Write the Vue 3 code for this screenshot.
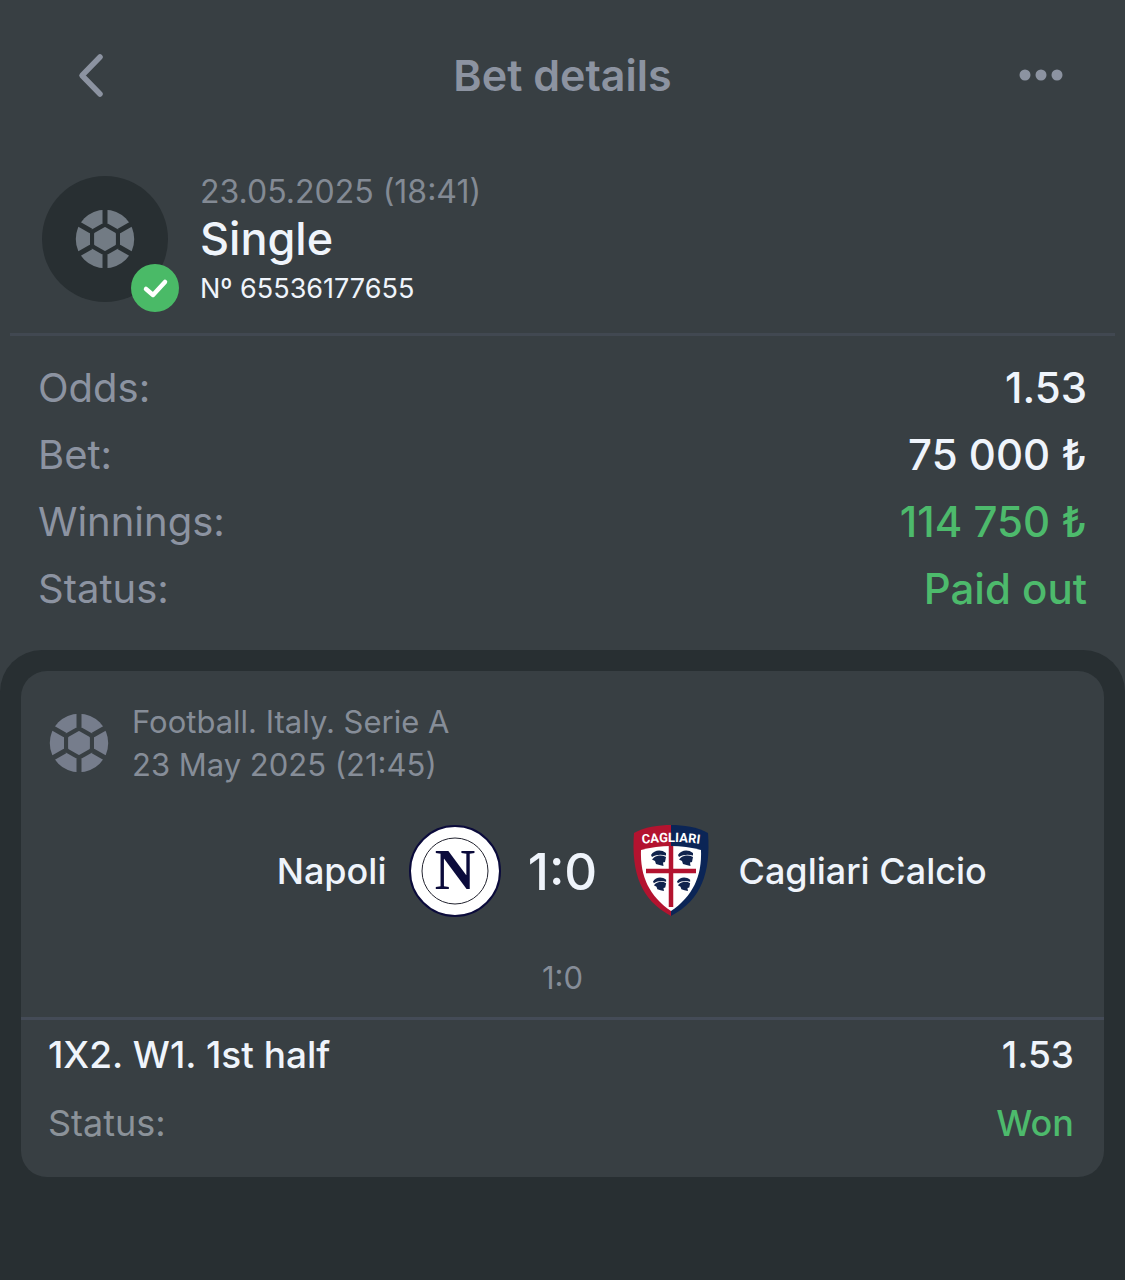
<script setup>
import { ref } from "vue"

const summary = ref([
    { id: 1, label: "Odds:", value: "1.53", win: false },
    { id: 2, label: "Bet:", value: "75 000 ₺", win: false },
    { id: 3, label: "Winnings:", value: "114 750 ₺", win: true },
    { id: 4, label: "Status:", value: "Paid out", win: true }
])

// the six outer panels are cut from the ring by these seams
const seams = [
    "M30 -2V14", "M30 46V62",
    "M16 22L2 14", "M44 22L58 14",
    "M16 38L2 46", "M44 38L58 46"
]
</script>

<template>
    <svg class="defs" aria-hidden="true">
        <defs>
            <mask id="ball-mask">
                <circle cx="30" cy="30" r="29.200" fill="#fff" />
                <path d="M30 13L45 21.600V38.400L30 47L15 38.400V21.600Z" fill="#000" />
                <path v-for="seam in seams" :key="seam" :d="seam" stroke="#000" stroke-width="5" />
                <path d="M30 19.200L39.700 24.700V35.300L30 40.800L20.300 35.300V24.700Z" fill="#fff" stroke="#fff" stroke-width="2.400" stroke-linejoin="round" />
            </mask>
            <symbol id="ball" viewBox="0 0 60 60">
                <rect width="60" height="60" fill="currentColor" mask="url(#ball-mask)" />
            </symbol>
            <symbol id="moor" viewBox="0 0 16 16">
                <path d="M0 5C3 0 10 -1 15 3L15 5.500C10 4 5 4.500 1 7Z" fill="#10234d" />
                <path d="M3 7.500C7 5 11 5 15 7L14 12L12 12.500L12.500 16L8.500 15L5 14L4 11L1 9.500Z" fill="#10234d" />
            </symbol>
        </defs>
    </svg>

    <main class="page">
        <header class="topbar">
            <button class="icon-btn" aria-label="Back">
                <svg width="30" height="48" viewBox="0 0 30 48">
                    <path d="M23 6L5 24.500L23 43" fill="none" stroke="currentColor" stroke-width="5.500" stroke-linecap="round" stroke-linejoin="round" />
                </svg>
            </button>
            <h1>Bet details</h1>
            <button class="icon-btn more" aria-label="More">
                <svg width="44" height="12" viewBox="0 0 44 12">
                    <circle cx="6" cy="6" r="5.500" fill="currentColor" />
                    <circle cx="22" cy="6" r="5.500" fill="currentColor" />
                    <circle cx="38" cy="6" r="5.500" fill="currentColor" />
                </svg>
            </button>
        </header>

        <section class="bet">
            <div class="avatar">
                <svg class="ball" width="60" height="60"><use href="#ball" /></svg>
                <span class="badge">
                    <svg width="48" height="48" viewBox="0 0 48 48">
                        <path d="M15 25L22 31L34 18" fill="none" stroke="#fff" stroke-width="4.500" stroke-linecap="round" stroke-linejoin="round" />
                    </svg>
                </span>
            </div>
            <div class="bet-info">
                <div class="bet-date">23.05.2025 (18:41)</div>
                <h2>Single</h2>
                <div class="bet-number">Nº 65536177655</div>
            </div>
        </section>

        <dl class="summary">
            <div v-for="row in summary" :key="row.id" class="row">
                <dt>{{ row.label }}</dt>
                <dd :class="{ win: row.win }">{{ row.value }}</dd>
            </div>
        </dl>

        <section class="events">
            <article class="card">
                <div class="league">
                    <svg class="ball" width="60" height="60"><use href="#ball" /></svg>
                    <div>
                        <div>Football. Italy. Serie A</div>
                        <div>23 May 2025 (21:45)</div>
                    </div>
                </div>

                <div class="match">
                    <div class="team home">
                        <span>Napoli</span>
                        <svg width="92" height="92" viewBox="0 0 92 92">
                            <circle cx="46" cy="46" r="45" fill="#fff" stroke="#0b0b3b" stroke-width="2" />
                            <circle cx="46" cy="46" r="33" fill="none" stroke="#22232f" stroke-width="1" />
                            <text x="46" y="64" class="napoli-letter" text-anchor="middle">N</text>
                        </svg>
                    </div>
                    <div class="score">1:0</div>
                    <div class="team">
                        <svg width="92" height="92" viewBox="0 0 92 92">
                            <path d="M46 0C34 0 19 2 9 8C6 48 16 75 46 91Z" fill="#b3132f" />
                            <path d="M46 0C58 0 73 2 83 8C86 48 76 75 46 91Z" fill="#0b2556" />
                            <path d="M16 25Q46 17 76 25C77 51 68 71 46 86C24 71 15 51 16 25Z" fill="#fff" />
                            <path d="M46 21V82M21 46H71" stroke="#b3132f" stroke-width="4.500" />
                            <use href="#moor" x="26" y="25" width="16" height="16" />
                            <use href="#moor" x="53" y="25" width="16" height="16" />
                            <use href="#moor" x="28" y="52" width="14" height="14" />
                            <use href="#moor" x="52" y="52" width="14" height="14" />
                            <path id="crest-arc" d="M10 20Q46 14 82 20" fill="none" />
                            <text class="crest-name" text-anchor="middle">
                                <textPath href="#crest-arc" startOffset="50%">CAGLIARI</textPath>
                            </text>
                        </svg>
                        <span>Cagliari Calcio</span>
                    </div>
                </div>
                <div class="period">1:0</div>

                <div class="outcome">
                    <div class="row pick">
                        <span>1X2. W1. 1st half</span>
                        <span>1.53</span>
                    </div>
                    <div class="row">
                        <span class="muted">Status:</span>
                        <span class="win">Won</span>
                    </div>
                </div>
            </article>
        </section>
    </main>
</template>

<style>
body {
    background-color: #282f32;
}
</style>

<style scoped>
.defs {
    position: absolute;
    width: 0;
    height: 0;
}
.page {
    background-color: #383f43;
    color: #eff4fb;
    font-family: Inter, "Liberation Sans", sans-serif;
}
h1, h2, dl, dd {
    margin: 0;
}
.topbar {
    display: grid;
    grid-template-columns: 1fr auto 1fr;
    align-items: center;
    height: 150px;
    padding: 0 52px;
    color: #8c93a1;
}
h1 {
    font-size: 43px;
    font-weight: 600;
}
.icon-btn {
    display: flex;
    align-items: center;
    justify-content: center;
    width: 80px;
    height: 64px;
    padding: 0;
    border: 0;
    background: none;
    color: inherit;
    cursor: pointer;
}
.more {
    justify-self: end;
    width: 64px;
}
.bet {
    display: flex;
    gap: 32px;
    margin: 0 10px;
    padding: 22px 32px 21px;
    border-bottom: 3px solid #414851;
}
.avatar {
    position: relative;
    display: flex;
    align-items: center;
    justify-content: center;
    width: 126px;
    height: 126px;
    margin-top: 4px;
    border-radius: 50%;
    background-color: #282f32;
}
.avatar .ball {
    color: #727b84;
}
.badge {
    position: absolute;
    right: -11px;
    bottom: -10px;
    width: 48px;
    height: 48px;
    border-radius: 50%;
    background-color: #4aba67;
}
.bet-date {
    font-size: 32px;
    line-height: 40px;
    color: #838a94;
}
h2 {
    font-size: 45px;
    font-weight: 500;
    line-height: 54px;
}
.bet-number {
    font-size: 27px;
    line-height: 46px;
}
.summary {
    padding: 18px 38px 28px;
    font-size: 42px;
    line-height: 67px;
}
.row {
    display: flex;
    justify-content: space-between;
}
dt {
    font-size: 40px;
    color: #8c93a1;
}
dd {
    font-weight: 500;
}
.win {
    color: #4dba6c;
}
.events {
    padding: 21px 21px 103px;
    border-radius: 42px 42px 0 0;
    background-color: #282f32;
}
.card {
    border-radius: 26px;
    background-color: #383f43;
}
.league {
    display: flex;
    align-items: center;
    gap: 23px;
    padding: 29px 28px 0;
    font-size: 31px;
    line-height: 43px;
    color: #868d98;
}
.league .ball {
    color: #767d8c;
}
.match {
    display: grid;
    grid-template-columns: 1fr 124px 1fr;
    align-items: center;
    margin-top: 39px;
}
.team {
    display: flex;
    align-items: center;
    gap: 22px;
    font-size: 36px;
    font-weight: 500;
}
.home {
    justify-content: flex-end;
}
.score {
    font-size: 51px;
    font-weight: 500;
    text-align: center;
}
.napoli-letter {
    font-family: "Liberation Serif", serif;
    font-size: 56px;
    font-weight: 700;
    fill: #0b0b3b;
}
.crest-name {
    font-family: Roboto, sans-serif;
    font-size: 13px;
    font-weight: 700;
    fill: #fff;
}
.period {
    padding: 40px 0 18px;
    font-size: 31px;
    line-height: 42px;
    text-align: center;
    color: #868d98;
}
.outcome {
    padding: 1px 30px 20px 27px;
    border-top: 3px solid #444b57;
    font-size: 36px;
    font-weight: 500;
    line-height: 68px;
}
.pick {
    font-size: 37px;
}
.muted {
    font-weight: 400;
    color: #8b9299;
}
</style>
